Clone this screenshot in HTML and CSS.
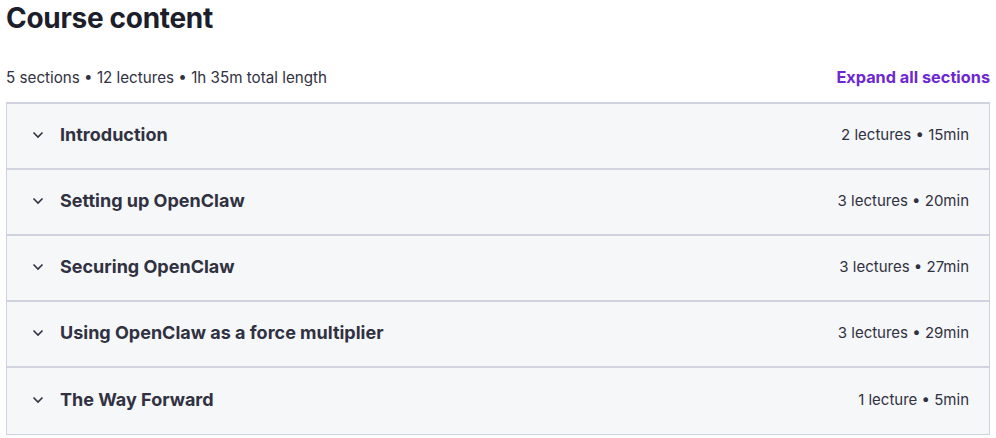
FILE: index.html
```html
<!DOCTYPE html>
<html lang="en">
<head>
<meta charset="utf-8">
<title>Course content</title>
<link rel="stylesheet" href="styles.css">
</head>
<body>
<div class="page">
  <h2 class="title">Course content</h2>
  <div class="meta-row">
    <span class="meta">5 sections • 12 lectures • 1h 35m total length</span>
    <button class="expand">Expand all sections</button>
  </div>
  <div class="sections">
    <div class="section">
      <svg class="chev" viewBox="0 0 12 8"><path d="M1.5 1.5l4.5 4.5 4.5-4.5" /></svg>
      <span class="name">Introduction</span>
      <span class="info">2 lectures • 15min</span>
    </div>
    <div class="section">
      <svg class="chev" viewBox="0 0 12 8"><path d="M1.5 1.5l4.5 4.5 4.5-4.5" /></svg>
      <span class="name">Setting up OpenClaw</span>
      <span class="info">3 lectures • 20min</span>
    </div>
    <div class="section">
      <svg class="chev" viewBox="0 0 12 8"><path d="M1.5 1.5l4.5 4.5 4.5-4.5" /></svg>
      <span class="name">Securing OpenClaw</span>
      <span class="info">3 lectures • 27min</span>
    </div>
    <div class="section">
      <svg class="chev" viewBox="0 0 12 8"><path d="M1.5 1.5l4.5 4.5 4.5-4.5" /></svg>
      <span class="name">Using OpenClaw as a force multiplier</span>
      <span class="info">3 lectures • 29min</span>
    </div>
    <div class="section">
      <svg class="chev" viewBox="0 0 12 8"><path d="M1.5 1.5l4.5 4.5 4.5-4.5" /></svg>
      <span class="name">The Way Forward</span>
      <span class="info">1 lecture • 5min</span>
    </div>
  </div>
</div>
</body>
</html>
```
FILE: styles.css
```css
* { box-sizing: border-box; }
html, body { margin: 0; padding: 0; background: #ffffff; }
body {
  font-family: "Inter", "Liberation Sans", sans-serif;
  color: #303141;
}
.page {
  padding: 0 6px 0 6px;
}
.title {
  margin: 0;
  font-size: 28px;
  font-weight: 700;
  line-height: 36px;
  color: #1d1e2b;
  letter-spacing: -0.3px;
}
.meta-row {
  display: flex;
  align-items: center;
  justify-content: space-between;
  margin-top: 28px;
  height: 26px;
}
.meta {
  font-size: 15.2px;
  color: #303141;
}
.expand {
  border: none;
  background: none;
  padding: 0;
  font-family: inherit;
  font-size: 16.3px;
  font-weight: 700;
  color: #6d28d2;
  cursor: pointer;
}
.sections {
  margin-top: 12px;
  border: 1px solid #d1d2e0;
  border-top: 2px solid #d1d2e0;
}
.section {
  display: flex;
  align-items: center;
  height: 66px;
  background: #f6f7f9;
  padding: 0 20px 3px 25px;
  border-bottom: 2px solid #d1d2e0;
}
.section:last-child { border-bottom: none; }
.chev {
  width: 12px;
  height: 8px;
  fill: none;
  stroke: #303141;
  stroke-width: 1.6;
  margin-right: 16px;
}
.name {
  flex: 1;
  font-size: 18px;
  font-weight: 700;
  color: #303141;
}
.info {
  font-size: 15px;
  color: #303141;
}
```
